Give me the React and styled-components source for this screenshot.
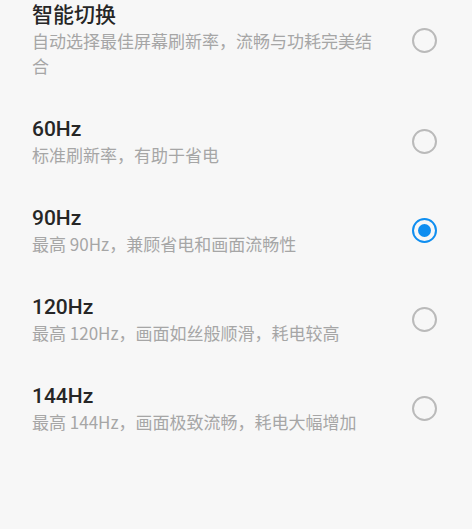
import React, { useState } from 'react'
import styled, { createGlobalStyle } from 'styled-components'

const GlobalStyle = createGlobalStyle`
    html, body {
        margin: 0;
        padding: 0;
        background: #f7f7f7;
    }
    body {
        font-family: Roboto, "Noto Sans CJK SC", sans-serif;
    }
`;

const modes = [
    { id: 'auto', title: '智能切换', desc: '自动选择最佳屏幕刷新率，流畅与功耗完美结合' },
    { id: '60', title: '60Hz', desc: '标准刷新率，有助于省电' },
    { id: '90', title: '90Hz', desc: '最高 90Hz，兼顾省电和画面流畅性' },
    { id: '120', title: '120Hz', desc: '最高 120Hz，画面如丝般顺滑，耗电较高' },
    { id: '144', title: '144Hz', desc: '最高 144Hz，画面极致流畅，耗电大幅增加' },
];

function App() {
    const [selected, setSelected] = useState('90')

    return (
        <Page>
            <GlobalStyle />
            <ModeList>
                {modes.map(mode => (
                    <ModeRow key={mode.id} onClick={() => setSelected(mode.id)}>
                        <ModeText>
                            <ModeTitle>{mode.title}</ModeTitle>
                            <ModeDesc>{mode.desc}</ModeDesc>
                        </ModeText>
                        <Radio $checked={selected === mode.id} />
                    </ModeRow>
                ))}
            </ModeList>
        </Page>
    );
}

const Page = styled.div`
    min-height: 529px;
    background: #f7f7f7;
`;

const ModeList = styled.div`
    display: flex;
    flex-direction: column;
`;

const ModeRow = styled.div`
    display: flex;
    align-items: center;
    gap: 30px;
    padding: 19px 35px 19px 32px;
    cursor: pointer;

    &:first-child {
        padding-top: 2px;
    }
`;

const ModeText = styled.div`
    flex: 1;
    display: flex;
    flex-direction: column;
`;

const ModeTitle = styled.div`
    font-size: 21px;
    font-weight: 500;
    line-height: 26px;
    color: #262626;
`;

const ModeDesc = styled.div`
    font-family: "Noto Sans CJK SC", sans-serif;
    font-size: 17px;
    line-height: 25px;
    color: #a6a6a6;
`;

const Radio = styled.div`
    flex: none;
    width: 25px;
    height: 25px;
    box-sizing: border-box;
    border-radius: 50%;
    border: 2px solid ${p => (p.$checked ? '#0f8ef0' : '#bababa')};
    display: flex;
    align-items: center;
    justify-content: center;

    &::after {
        content: '';
        width: 13px;
        height: 13px;
        border-radius: 50%;
        background: #0f8ef0;
        display: ${p => (p.$checked ? 'block' : 'none')};
    }
`;

export default App;
